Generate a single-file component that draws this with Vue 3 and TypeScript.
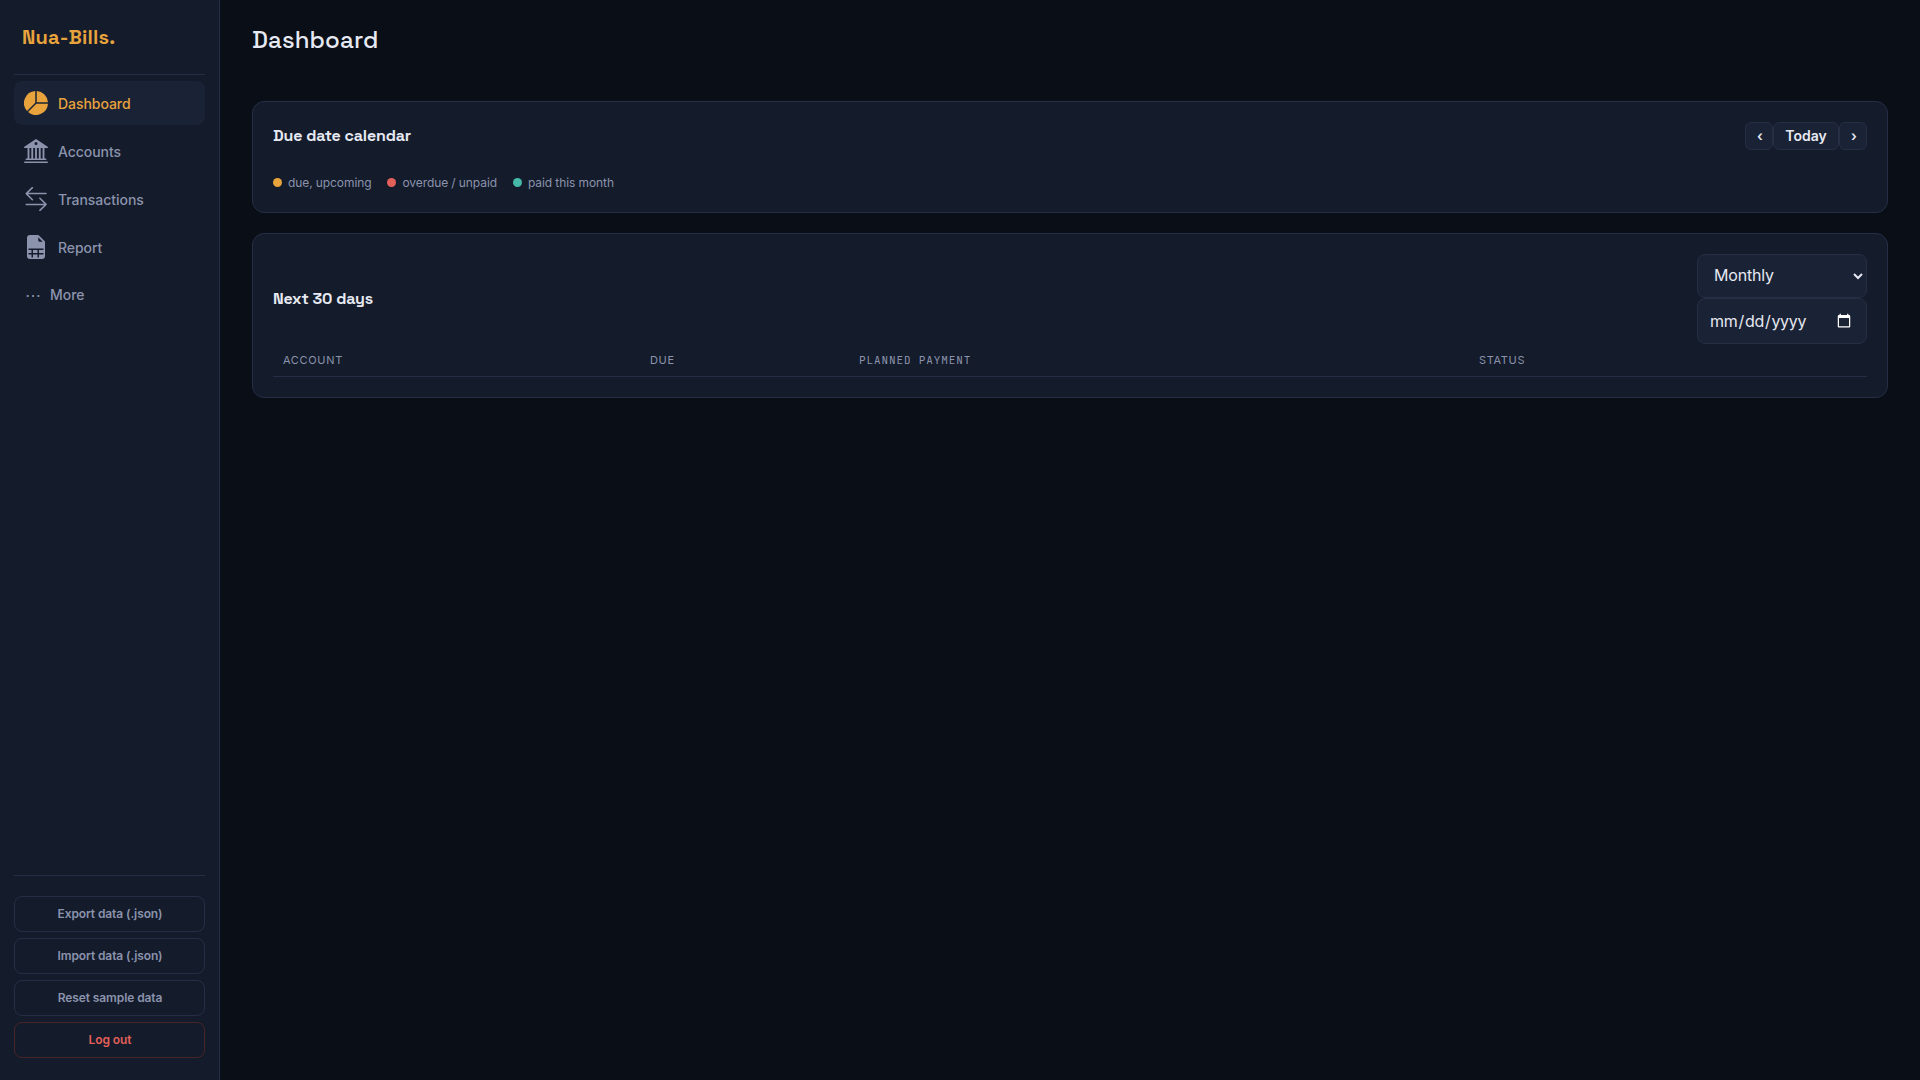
<script setup lang="ts">
import { ref } from 'vue'

interface NavItem {
  label: string
  paths: string[]
  stroke?: boolean
}

const nav: NavItem[] = [
  {
    label: 'Dashboard',
    paths: [
      'M15.985 8.5H8.207l-5.5 5.5a8 8 0 0 0 13.277-5.5zM2 13.292A8 8 0 0 1 7.5.015v7.778zM8.5.015V7.5h7.485A8 8 0 0 0 8.5.015',
    ],
  },
  {
    label: 'Accounts',
    paths: [
      'M8.277.084a.5.5 0 0 0-.554 0l-7.5 5A.5.5 0 0 0 .5 6h1.875v7H1.5a.5.5 0 0 0 0 1h13a.5.5 0 1 0 0-1h-.875V6H15.5a.5.5 0 0 0 .277-.916zM12.375 6v7h-1.25V6zm-2.5 0v7h-1.25V6zm-2.5 0v7h-1.25V6zm-2.5 0v7h-1.25V6zM8 4a1 1 0 1 1 0-2 1 1 0 0 1 0 2M.5 15a.5.5 0 0 0 0 1h15a.5.5 0 1 0 0-1z',
    ],
  },
  {
    label: 'Transactions',
    stroke: true,
    paths: ['M14.7 4.4H1.5M5.6.4 1.5 4.4l4.1 4.1', 'M1.5 11.6h13.2M10.6 7.5l4.1 4.1-4.1 4'],
  },
  {
    label: 'Report',
    paths: [
      'M6 12v-2h3v2z',
      'M9.293 0H4a2 2 0 0 0-2 2v12a2 2 0 0 0 2 2h8a2 2 0 0 0 2-2V4.707A1 1 0 0 0 13.707 4L10 .293A1 1 0 0 0 9.293 0M9.5 3.5v-2l3 3h-2a1 1 0 0 1-1-1M3 9h10v1h-3v2h3v1h-3v2H9v-2H6v2H5v-2H3v-1h2v-2H3z',
    ],
  },
]

const active = ref('Dashboard')
const period = ref('Monthly')
const from = ref('')
</script>

<template>
  <div class="app">
    <aside class="sidebar">
      <div class="brand"><span>Nua-Bills.</span></div>
      <nav class="nav">
        <a
          v-for="item in nav"
          :key="item.label"
          class="nav-item"
          :class="{ active: item.label === active }"
          @click="active = item.label"
        >
          <svg viewBox="0 0 16 16" class="icon" :class="{ line: item.stroke }">
            <path v-for="d in item.paths" :key="d" :d="d" />
          </svg>
          <span>{{ item.label }}</span>
        </a>
        <a class="nav-item more"><span class="dots">⋯</span><span>More</span></a>
      </nav>
      <div class="actions">
        <button>Export data (.json)</button>
        <button>Import data (.json)</button>
        <button>Reset sample data</button>
        <button class="danger">Log out</button>
      </div>
    </aside>

    <main class="main">
      <h1>Dashboard</h1>

      <section class="card calendar">
        <header class="card-head">
          <h2>Due date calendar</h2>
          <div class="pager">
            <button class="step">‹</button>
            <button class="today">Today</button>
            <button class="step">›</button>
          </div>
        </header>
        <div class="legend">
          <span><i class="amber"></i>due, upcoming</span>
          <span><i class="red"></i>overdue / unpaid</span>
          <span><i class="teal"></i>paid this month</span>
        </div>
      </section>

      <section class="card upcoming">
        <header class="card-head">
          <h2>Next 30 days</h2>
          <div class="filters">
            <select v-model="period">
              <option>Monthly</option>
              <option>Weekly</option>
            </select>
            <input v-model="from" type="date" />
          </div>
        </header>
        <table>
          <colgroup>
            <col class="c1" /><col class="c2" /><col class="c3" /><col />
          </colgroup>
          <thead>
            <tr>
              <th>Account</th>
              <th>Due</th>
              <th class="mono">Planned payment</th>
              <th>Status</th>
            </tr>
          </thead>
        </table>
      </section>
    </main>
  </div>
</template>

<style>
body {
  margin: 0;
  background: #0a0e17;
  color-scheme: dark;
}
</style>

<style scoped>
* {
  box-sizing: border-box;
}
.app {
  display: flex;
  height: 100vh;
  background: #0a0e17;
  color: #e6e9f2;
  font-family: Inter, sans-serif;
  font-size: 14px;
}
button,
select,
input {
  font-family: inherit;
  margin: 0;
}
.sidebar {
  width: 220px;
  flex: none;
  display: flex;
  flex-direction: column;
  padding: 0 14px 22px;
  background: #141b2a;
  border-right: 1px solid #252e45;
}
.brand {
  height: 75px;
  flex: none;
  padding: 25px 8px 0;
  border-bottom: 1px solid #252e45;
  color: #e8a33d;
  font: 700 20px/24px 'Space Grotesk', Inter, sans-serif;
  letter-spacing: 0.2px;
}
.nav {
  display: flex;
  flex-direction: column;
  gap: 4px;
  padding-top: 6px;
}
.nav-item {
  display: flex;
  align-items: center;
  gap: 10px;
  height: 44px;
  padding: 0 10px;
  border-radius: 8px;
  color: #8b93ad;
  font-weight: 500;
  letter-spacing: -0.05px;
  cursor: pointer;
}
.nav-item.active {
  background: #1a2235;
  color: #e8a33d;
}
.icon {
  width: 24px;
  height: 24px;
  margin-top: -1px;
  fill: currentColor;
}
.icon.line {
  fill: none;
  stroke: currentColor;
  stroke-width: 1;
  stroke-linecap: round;
  stroke-linejoin: round;
}
.nav-item.more {
  height: 43px;
}
.dots {
  width: 16px;
  padding-left: 1px;
  font-size: 16px;
}
.actions {
  margin-top: auto;
  border-top: 1px solid #252e45;
  padding-top: 20px;
  display: flex;
  flex-direction: column;
  gap: 6px;
}
.actions button {
  height: 36px;
  padding: 0 5px 2px 6px;
  border: 1px solid #252e45;
  border-radius: 8px;
  background: transparent;
  color: #8b93ad;
  font-size: 12px;
  font-weight: 600;
  letter-spacing: -0.1px;
}
.actions button.danger {
  color: #e2605a;
  border-color: #462428;
}
.main {
  flex: 1;
  padding: 24px 32px;
}
h1,
h2 {
  margin: 0;
  font-family: 'Space Grotesk', Inter, sans-serif;
  font-weight: 600;
}
h1 {
  height: 77px;
  font-size: 24px;
  font-weight: 550;
  line-height: 32px;
  letter-spacing: 0.12px;
}
h2 {
  font-size: 16px;
  line-height: 20px;
  letter-spacing: -0.16px;
}
.card {
  background: #141b2a;
  border: 1px solid #252e45;
  border-radius: 12px;
  padding: 20px;
}
.calendar {
  height: 112px;
}
.upcoming {
  height: 165px;
  margin-top: 20px;
}
.card-head {
  display: flex;
  justify-content: space-between;
  align-items: center;
}
.pager {
  display: flex;
}
.pager button {
  height: 28px;
  padding: 0 0 2px;
  border: 1px solid #252e45;
  border-radius: 6px;
  background: #1a2235;
  color: #e6e9f2;
  font-size: 14px;
  font-weight: 600;
}
.pager .step {
  width: 28px;
  padding-left: 2px;
}
.pager .today {
  width: 66px;
}
.legend {
  display: flex;
  gap: 16px;
  margin-top: 25px;
  color: #8b93ad;
  font-size: 12px;
  line-height: 15px;
  letter-spacing: -0.09px;
}
.legend span {
  display: flex;
  align-items: center;
}
.legend i {
  width: 9px;
  height: 9px;
  margin-right: 6px;
  border-radius: 50%;
}
.amber {
  background: #e8a33d;
}
.red {
  background: #e2605a;
}
.teal {
  background: #45b8a9;
}
.filters {
  display: flex;
  flex-direction: column;
  width: 170px;
}
.filters select,
.filters input {
  width: 170px;
  border: 1px solid #252e45;
  border-radius: 8px;
  background-color: #1a2235;
  color: #e6e9f2;
  font-size: 16px;
  letter-spacing: -0.2px;
}
.filters select {
  height: 44px;
  padding: 0 12px 2px;
}
.filters input {
  height: 46px;
  padding: 0 12px 0 11px;
  letter-spacing: -0.3px;
}
table {
  width: 100%;
  table-layout: fixed;
  border-collapse: collapse;
}
.c1 {
  width: 367px;
}
.c2 {
  width: 209px;
}
.c3 {
  width: 620px;
}
th {
  height: 32px;
  padding: 1px 10px 0;
  border-bottom: 1px solid #252e45;
  color: #8b93ad;
  font-size: 11px;
  font-weight: 400;
  letter-spacing: 0.66px;
  text-align: left;
  text-transform: uppercase;
}
th.mono {
  font-family: 'JetBrains Mono', 'Liberation Mono', monospace;
  letter-spacing: 0.88px;
}
</style>
